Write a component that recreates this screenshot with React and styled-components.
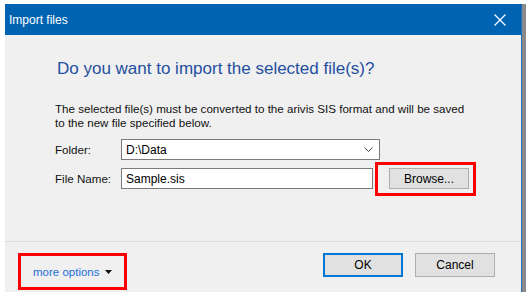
import React from "react";
import styled, { createGlobalStyle } from "styled-components";

const GlobalStyle = createGlobalStyle`
  html, body {
    margin: 0;
    padding: 0;
    background: #ffffff;
  }
  body {
    font-family: "Liberation Sans", Arial, sans-serif;
    width: 526px;
    height: 292px;
    overflow: hidden;
  }
`;

const Page = styled.div`
  padding: 4px 0 0 5px;
`;

const Window = styled.div`
  width: 516px;
  height: 300px;
  background: #f0f0f0;
  border-right: 1px solid #1d6fc2;
  box-shadow: 4px 0 0 #8a8a8a;
  display: flex;
  flex-direction: column;
`;

const TitleBar = styled.div`
  height: 31px;
  background: #0063b1;
  color: #ffffff;
  display: flex;
  align-items: center;
  justify-content: space-between;
  padding: 0 15px 0 4px;
  font-size: 12px;
`;

const Body = styled.div`
  flex: 0 0 206px;
  padding: 22px 0 0 50px;
  box-sizing: border-box;
`;

const Heading = styled.h1`
  margin: 0 0 21px 2px;
  font-size: 17px;
  line-height: 24px;
  font-weight: normal;
  color: #1f4fa0;
`;

const Note = styled.p`
  margin: 0 0 9px;
  font-size: 11.6px;
  line-height: 14px;
  color: #111111;
`;

const Row = styled.div`
  display: flex;
  align-items: center;
  height: 21px;
  margin-bottom: 8px;
`;

const Label = styled.span`
  width: 66px;
  font-size: 11.6px;
  color: #111111;
`;

const Field = styled.div`
  width: ${(p) => p.$width}px;
  height: 21px;
  box-sizing: border-box;
  background: #ffffff;
  border: 1px solid #7a7a7a;
  display: flex;
  align-items: center;
  justify-content: space-between;
  padding: 0 6px 0 4px;
  font-size: 12px;
  color: #000000;
`;

const Marked = styled.div`
  position: relative;
  margin-left: 16px;
`;

const Highlight = styled.div`
  position: absolute;
  top: ${(p) => p.$top}px;
  left: ${(p) => p.$left}px;
  right: ${(p) => p.$right}px;
  bottom: ${(p) => p.$bottom}px;
  border: 3px solid #ff0000;
  pointer-events: none;
`;

const Button = styled.button`
  width: 80px;
  height: ${(p) => p.$height || 24}px;
  box-sizing: border-box;
  background: #e1e1e1;
  border: ${(p) => (p.$primary ? "2px solid #0078d7" : "1px solid #adadad")};
  font-family: inherit;
  font-size: 12px;
  color: #000000;
  padding: 0;
`;

const Footer = styled.div`
  border-top: 1px solid #dcdcdc;
  display: flex;
  align-items: flex-start;
  justify-content: space-between;
  padding: 11px 26px 0 13px;
  flex: 1;
`;

const MoreOptions = styled.div`
  position: relative;
  width: 109px;
  height: 37px;
  display: flex;
  align-items: center;
  padding-left: 15px;
  box-sizing: border-box;
  gap: 6px;
  font-size: 11.5px;
  color: #1c6fd8;
`;

const Buttons = styled.div`
  display: flex;
  gap: 12px;
`;

function CloseIcon() {
  return (
    <svg width="12" height="12" viewBox="0 0 12 12">
      <path d="M0.5 0.5 L11.5 11.5 M11.5 0.5 L0.5 11.5" stroke="#ffffff" strokeWidth="1.2" />
    </svg>
  );
}

function Chevron() {
  return (
    <svg width="9" height="5" viewBox="0 0 9 5">
      <path d="M0.5 0.5 L4.5 4.5 L8.5 0.5" stroke="#4a4a4a" strokeWidth="1" fill="none" />
    </svg>
  );
}

function Caret() {
  return (
    <svg width="7" height="4" viewBox="0 0 7 4">
      <path d="M0 0 L7 0 L3.5 4 Z" fill="#111111" />
    </svg>
  );
}

export default function App() {
  return (
    <>
      <GlobalStyle />
      <Page>
        <Window>
          <TitleBar>
            <span>Import files</span>
            <CloseIcon />
          </TitleBar>
          <Body>
            <Heading>Do you want to import the selected file(s)?</Heading>
            <Note>
              The selected file(s) must be converted to the arivis SIS format and will be saved
              <br />
              to the new file specified below.
            </Note>
            <Row>
              <Label>Folder:</Label>
              <Field $width={259}>
                <span>D:\Data</span>
                <Chevron />
              </Field>
            </Row>
            <Row>
              <Label>File Name:</Label>
              <Field $width={252}>
                <span>Sample.sis</span>
              </Field>
              <Marked>
                <Button $height={21}>Browse...</Button>
                <Highlight $top={-6} $left={-14} $right={-7} $bottom={-7} />
              </Marked>
            </Row>
          </Body>
          <Footer>
            <MoreOptions>
              <span>more options</span>
              <Caret />
              <Highlight $top={0} $left={0} $right={0} $bottom={0} />
            </MoreOptions>
            <Buttons>
              <Button $primary>OK</Button>
              <Button>Cancel</Button>
            </Buttons>
          </Footer>
        </Window>
      </Page>
    </>
  );
}
